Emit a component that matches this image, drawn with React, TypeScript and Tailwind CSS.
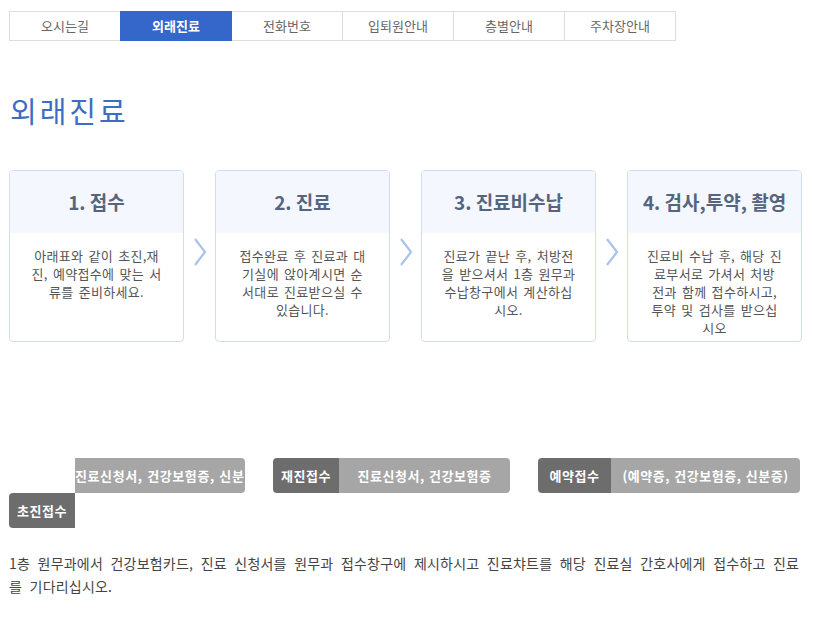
import React from "react";

const tabs = ["오시는길", "외래진료", "전화번호", "입퇴원안내", "층별안내", "주차장안내"];

const cards: { title: string; lines: string[] }[] = [
  { title: "1. 접수", lines: ["아래표와 같이 초진,재", "진, 예약접수에 맞는 서", "류를 준비하세요."] },
  { title: "2. 진료", lines: ["접수완료 후 진료과 대", "기실에 앉아계시면 순", "서대로 진료받으실 수", "있습니다."] },
  { title: "3. 진료비수납", lines: ["진료가 끝난 후, 처방전", "을 받으셔서 1층 원무과", "수납창구에서 계산하십", "시오."] },
  { title: "4. 검사,투약, 촬영", lines: ["진료비 수납 후, 해당 진", "료부서로 가셔서 처방", "전과 함께 접수하시고,", "투약 및 검사를 받으십", "시오"] },
];

function Arrow() {
  return (
    <div className="w-[31px] flex justify-center self-start mt-[68px]">
      <svg width="14" height="28" viewBox="0 0 14 28" fill="none">
        <polyline points="2,1 12,14 2,27" stroke="#a9c3ea" strokeWidth="2.2" />
      </svg>
    </div>
  );
}

export default function App() {
  return (
    <div
      className="w-[813px] h-[643px] bg-white overflow-hidden"
      style={{ fontFamily: '"Noto Sans CJK KR", "Noto Sans", sans-serif' }}
    >
      <div className="flex ml-[9px] pt-[11px]">
        {tabs.map((t, i) => (
          <div
            key={t}
            className={
              i === 1
                ? "w-[112px] h-[30px] -ml-px flex items-center justify-center bg-[#3566c9] border border-[#3566c9] text-white font-bold text-[13px] relative"
                : i === 0
                ? "w-[112px] h-[30px] flex items-center justify-center border border-[#dddddd] text-[#666666] text-[13px]"
                : "w-[112px] h-[30px] -ml-px flex items-center justify-center border border-[#dddddd] text-[#666666] text-[13px]"
            }
          >
            {t}
          </div>
        ))}
      </div>

      <h1 className="ml-[10px] mt-[51px] h-[36px] leading-[36px] text-[29px] text-[#3d6cc4] tracking-[3px]">
        외래진료
      </h1>

      <div className="flex ml-[9px] mt-[42px]">
        {cards.map((c, i) => (
          <React.Fragment key={c.title}>
            {i > 0 && <Arrow />}
            <div className="w-[175px] h-[172px] border border-[#cfdef2] rounded-[4px] overflow-hidden">
              <div className="h-[62px] bg-[#f4f8fe] flex items-center justify-center text-[19px] font-bold text-[#56657f] whitespace-nowrap">
                {c.title}
              </div>
              <div className="pt-[14px] text-center text-[13px] leading-[18px] text-[#555555] whitespace-nowrap tracking-[0.3px] [word-spacing:2px]">
                {c.lines.map((l) => (
                  <div key={l}>{l}</div>
                ))}
              </div>
            </div>
          </React.Fragment>
        ))}
      </div>

      <div className="flex items-start ml-[9px] mt-[116px] text-[13px] font-bold text-white tracking-[0.5px] [word-spacing:1px]">
        <div className="flex flex-col w-[236px]">
          <div className="ml-[66px] w-[170px] h-[35px] leading-[35px] bg-[#a6a6a6] rounded-r-[4px] whitespace-nowrap tracking-[0.6px]">
            진료신청서, 건강보험증, 신분
          </div>
          <div className="w-[66px] h-[35px] bg-[#6d6d6d] rounded-l-[4px] flex items-center justify-center">
            초진접수
          </div>
        </div>
        <div className="flex ml-[28px]">
          <div className="w-[66px] h-[35px] bg-[#6d6d6d] rounded-l-[4px] flex items-center justify-center">
            재진접수
          </div>
          <div className="w-[171px] h-[35px] bg-[#a6a6a6] rounded-r-[4px] flex items-center justify-center whitespace-nowrap">
            진료신청서, 건강보험증
          </div>
        </div>
        <div className="flex ml-[28px]">
          <div className="w-[73px] h-[35px] bg-[#6d6d6d] rounded-l-[4px] flex items-center justify-center">
            예약접수
          </div>
          <div className="w-[189px] h-[35px] bg-[#a6a6a6] rounded-r-[4px] flex items-center justify-center whitespace-nowrap">
            (예약증, 건강보험증, 신분증)
          </div>
        </div>
      </div>

      <p className="ml-[9px] mt-[24px] text-[14px] leading-[23px] text-[#444444] whitespace-nowrap tracking-[0.2px] [word-spacing:4.2px]">
        1층 원무과에서 건강보험카드, 진료 신청서를 원무과 접수창구에 제시하시고 진료챠트를 해당 진료실 간호사에게 접수하고 진료
        <br />를 기다리십시오.
      </p>
    </div>
  );
}
